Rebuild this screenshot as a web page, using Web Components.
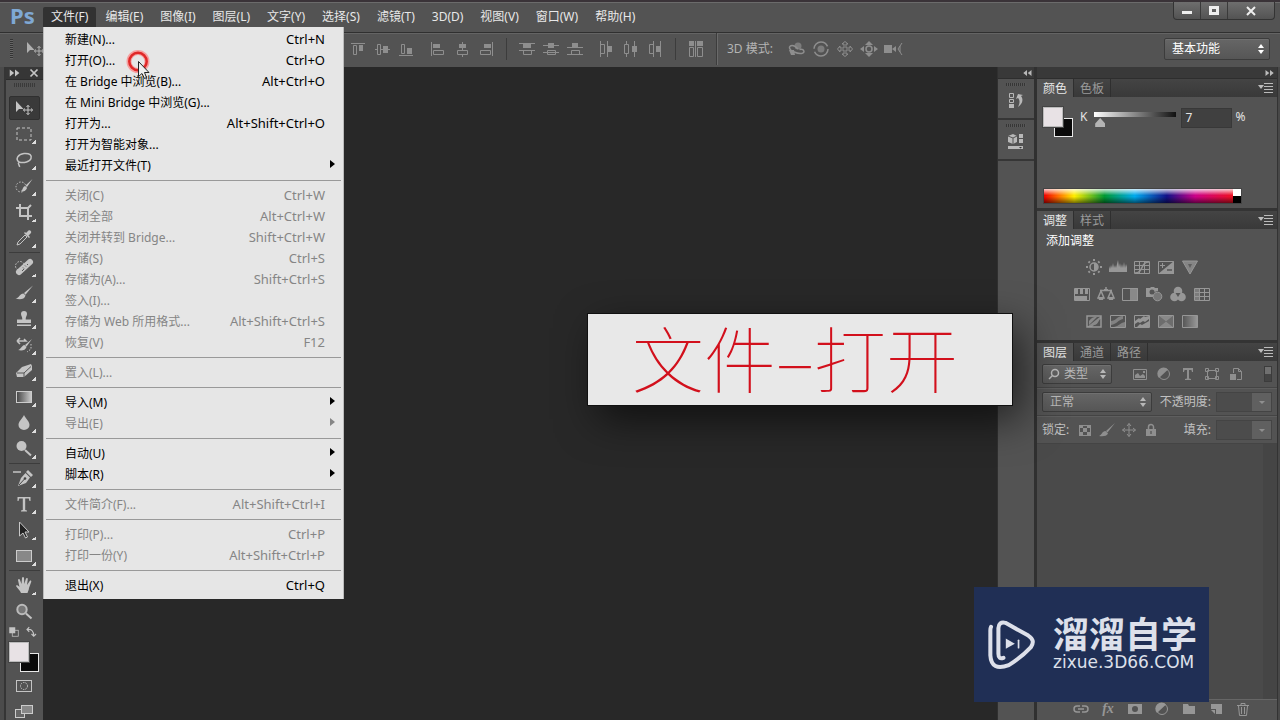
<!DOCTYPE html>
<html lang="zh-CN">
<head>
<meta charset="utf-8">
<title>Photoshop</title>
<style>
  body { margin: 0; background: #282828; font: 12px/16px "Noto Sans", "Noto Sans CJK SC", sans-serif; color: #e4e4e4; }
</style>
</head>
<body>
<ps-app>
  <ps-menubar slot="menubar">
    <ps-menu open>文件(F)</ps-menu><ps-menu>编辑(E)</ps-menu><ps-menu>图像(I)</ps-menu><ps-menu>图层(L)</ps-menu>
    <ps-menu>文字(Y)</ps-menu><ps-menu>选择(S)</ps-menu><ps-menu>滤镜(T)</ps-menu><ps-menu>3D(D)</ps-menu>
    <ps-menu>视图(V)</ps-menu><ps-menu>窗口(W)</ps-menu><ps-menu>帮助(H)</ps-menu>
  </ps-menubar>
  <ps-options slot="options"></ps-options>
  <ps-toolbox slot="tools"></ps-toolbox>
  <ps-icon-dock slot="dock"></ps-icon-dock>
  <ps-panels slot="panels">
    <ps-panel tabs="颜色,色板"><ps-color></ps-color></ps-panel>
    <ps-panel tabs="调整,样式"><ps-adjust>添加调整</ps-adjust></ps-panel>
    <ps-panel tabs="图层,通道,路径" grow><ps-layers></ps-layers></ps-panel>
  </ps-panels>
  <ps-dropdown slot="overlay">
    <ps-item key="Ctrl+N">新建(N)...</ps-item>
    <ps-item key="Ctrl+O">打开(O)...</ps-item>
    <ps-item key="Alt+Ctrl+O">在 Bridge 中浏览(B)...</ps-item>
    <ps-item>在 Mini Bridge 中浏览(G)...</ps-item>
    <ps-item key="Alt+Shift+Ctrl+O">打开为...</ps-item>
    <ps-item>打开为智能对象...</ps-item>
    <ps-item sub>最近打开文件(T)</ps-item>
    <ps-rule></ps-rule>
    <ps-item disabled key="Ctrl+W">关闭(C)</ps-item>
    <ps-item disabled key="Alt+Ctrl+W">关闭全部</ps-item>
    <ps-item disabled key="Shift+Ctrl+W">关闭并转到 Bridge...</ps-item>
    <ps-item disabled key="Ctrl+S">存储(S)</ps-item>
    <ps-item disabled key="Shift+Ctrl+S">存储为(A)...</ps-item>
    <ps-item disabled>签入(I)...</ps-item>
    <ps-item disabled key="Alt+Shift+Ctrl+S">存储为 Web 所用格式...</ps-item>
    <ps-item disabled key="F12">恢复(V)</ps-item>
    <ps-rule></ps-rule>
    <ps-item disabled>置入(L)...</ps-item>
    <ps-rule></ps-rule>
    <ps-item sub>导入(M)</ps-item>
    <ps-item disabled sub>导出(E)</ps-item>
    <ps-rule></ps-rule>
    <ps-item sub>自动(U)</ps-item>
    <ps-item sub>脚本(R)</ps-item>
    <ps-rule></ps-rule>
    <ps-item disabled key="Alt+Shift+Ctrl+I">文件简介(F)...</ps-item>
    <ps-rule></ps-rule>
    <ps-item disabled key="Ctrl+P">打印(P)...</ps-item>
    <ps-item disabled key="Alt+Shift+Ctrl+P">打印一份(Y)</ps-item>
    <ps-rule></ps-rule>
    <ps-item key="Ctrl+Q">退出(X)</ps-item>
  </ps-dropdown>
  <ps-caption slot="overlay">文件–打开</ps-caption>
  <ps-brand slot="overlay"><span slot="name">溜溜自学</span><span slot="site">zixue.3D66.COM</span></ps-brand>
  <ps-pointer slot="overlay"></ps-pointer>
</ps-app>

<script>
const define = (tag, css, html) => customElements.define(tag, class extends HTMLElement {
  connectedCallback() {
    if (this.shadowRoot) return;
    const t = document.createElement('template');
    t.innerHTML = `<style>*{box-sizing:border-box}:host{display:block;box-sizing:border-box}button,input,select{font:inherit;color:inherit;margin:0;padding:0;border:0;border-radius:0;background:none}${css}</style>` +
      (typeof html === 'function' ? html(this) : html);
    this.attachShadow({ mode: 'open' }).append(t.content.cloneNode(true));
  }
});

/* Glyphs: "c" = currentColor fill, "s" = currentColor stroke. */
const G = {
  /* tool glyphs, 20 x 20 */
  move: '<path class="c" d="M2 3v11l3-3h4.500z"/><path class="s" d="M14 7.500v9M9.500 12h9M12.500 9l1.500-1.700L15.500 9M12.500 15l1.500 1.700 1.500-1.700M11 10.500L9.300 12l1.700 1.500M17 10.500l1.700 1.500-1.700 1.500"/>',
  marquee: '<rect class="s" x="3" y="4" width="14" height="12" stroke-dasharray="3 2"/>',
  lasso: '<path class="s w" d="M5 12C1 9 4 4 10 3.500s8 2 7 5-7 5-12 3.500c-2 2 1 3 .5 5"/>',
  quick: '<circle class="s" cx="7" cy="11" r="5" stroke-dasharray="1.500 1.500"/><path class="c" d="M18.500 3l-7 6.500 1.500 1.500zM11 10l2 2c-1 3-4 4-6 3 2-1 1.500-4 4-5z"/>',
  crop: '<path class="s b" d="M6 2v12h12M2 6h12v12M14 6l3-3"/>',
  dropper: '<path class="s" d="M3 17l1-3 7-7 2 2-7 7z"/><path class="c" d="M10 5l5 5 1-1-1.500-1.500 2.500-2.500c1-1.500-1-3.500-2.500-2.500L12 5l-1-1z"/>',
  heal: '<circle class="s" cx="6" cy="9" r="4.500" stroke-dasharray="1.500 1.500"/><path d="M5 15L16 5" stroke="currentColor" stroke-width="6" stroke-linecap="round"/><path d="M9 10.500l1 1M11 8.500l1 1M10 12l-2 2M14 7l-1 1" stroke="#555"/>',
  brush: '<path class="c" d="M19 2.500L10 10l1.500 1.700zM9.500 10.500l2 2c-1 4-6 4.500-10 3 4-.5 4-5 8-5z"/>',
  stamp: '<path class="c" d="M7 5a3 3 0 0 1 6 0c0 2-1.500 3-1.300 5.500H17V14H3v-3.500h5.300C8.500 8 7 7 7 5zM3 15.500h14V17H3z"/>',
  history: '<path class="s w" d="M3 6h9l-2-2M3 6l3-3M3 6l3 3"/><path class="c" d="M18 4l-7 6 1.500 1.500zM10.500 10l2 2c-1 3.500-5 4-8.500 3 3-.5 3.500-4.500 6.500-5z"/><path class="s" d="M17 9v5l-4 3" stroke-dasharray="1.500 1.500"/>',
  eraser: '<path class="c" d="M8 6l9-3 1 2v4l-8 7H3L2 12z"/><path d="M3 12h7l7-6.500M10 12v4" stroke="#555" fill="none"/>',
  gradient: '<defs><linearGradient id="g"><stop stop-color="#444"/><stop offset="1" stop-color="#ccc"/></linearGradient></defs><rect x="2.500" y="4.500" width="15" height="11" fill="url(#g)" stroke="#ccc"/>',
  drop: '<path class="c" d="M10 2c2 4 5.500 6.500 5.500 10a5.500 5 0 0 1-11 0C4.500 8.500 8 6 10 2z"/>',
  dodge: '<circle class="c" cx="7.500" cy="7" r="5"/><path class="s b" d="M11 11l6 5.500"/>',
  pen: '<path class="s w" d="M-1 4h8"/><path class="c" d="M14 2l5 5-2 2-5-5zM11.500 5L16 9.500 12 15l-8 3 3-8z"/><path d="M5 17l5.500-6" stroke="#444"/><circle cx="11" cy="10.500" r="1.300" fill="#444"/>',
  type: '<path class="c" d="M3.500 3h13v4h-1l-.7-2.500h-3.600V16l1.800.5v1H7v-1l1.800-.5V4.500H5.200L4.500 7h-1z"/>',
  select: '<path d="M5.500 2v14l3.500-3 2.500 5 2-1-2.500-5H15z" fill="#222" stroke="#c8c8c8"/>',
  shape: '<rect x="2.500" y="4.500" width="15" height="11" fill="#888" stroke="#ccc"/>',
  hand: '<path class="c" d="M7 18c-1-3-4-5-5-7 0-1.500 2-1 3.500 1L4 5c.3-1.300 1.700-1.200 2 0l1.500 4L8 3c.3-1.300 1.800-1.300 2 0l.3 6L12 3.500c.5-1 1.900-.7 1.800.5L13 10l2.700-4c.8-1 2-.2 1.500 1L15 13c0 2-1 3-1.500 5z"/>',
  zoom: '<circle cx="8" cy="7.500" r="4.700" fill="#777" stroke="#bbb" stroke-width="2"/><path class="s b" d="M12 11.500l5.500 5"/>',
  mask: '<rect class="s" x="2.500" y="4.500" width="15" height="11"/><circle class="s" cx="10" cy="10" r="3.500" stroke-dasharray="1.500 1"/>',
  screens: '<rect x="1.500" y="7.500" width="9" height="8" fill="#666" stroke="#ccc"/><rect x="7.500" y="3.500" width="11" height="8" fill="#888" stroke="#ccc"/>',
  mini: '<rect x="7" y="7" width="8" height="8" class="s"/><rect class="c" x="3" y="3" width="8" height="8"/>',
  swap: '<path class="s w" d="M4 6c6-1 9 2 9 9M7 3L4 6l3 3M10 12l3 3 3-3"/>',
  /* bar glyphs, 16 x 16 */
  at: '<path class="s" d="M1 2.500h14M3.500 4.500h3v9h-3z"/><path class="c" d="M9 4h4v6H9z"/>',
  am: '<path class="s" d="M1 8.500h2M7 8.500h2M13 8.500h3M3.500 3.500h3v10h-3z"/><path class="c" d="M9 5h5v7H9z"/>',
  ab: '<path class="s" d="M1 14.500h14M3.500 3.500h3v9h-3z"/><path class="c" d="M9 7h5v6H9z"/>',
  al: '<path class="s" d="M1.500 1v14M3.500 9.500h10v4h-10z"/><path class="c" d="M3 3h7v4H3z"/>',
  ac: '<path class="s" d="M8.500 1v2M8.500 7v2M8.500 13v3M3.500 9.500h10v4h-10z"/><path class="c" d="M5 3h7v4H5z"/>',
  ar: '<path class="s" d="M14.500 1v14M2.500 9.500h10v4h-10z"/><path class="c" d="M6 3h7v4H6z"/>',
  dt: '<path class="s" d="M0 2.500h16M0 9.500h16M4.500 9.500h8v4h-8z"/><path class="c" d="M4 3h8v4H4z"/>',
  dm: '<path class="s" d="M0 4.500h16M0 11.500h16M4.500 9.500h8v4h-8z"/><path class="c" d="M5 2h6v5H5z"/>',
  db: '<path class="s" d="M0 6.500h16M0 13.500h16M4.500 9.500h8v4h-8z"/><path class="c" d="M5 2h6v4H5z"/>',
  dl: '<path class="s" d="M1.500 0v16M8.500 0v16M1.500 3.500h4v9h-4z"/><path class="c" d="M9 5h4v6H9z"/>',
  dc: '<path class="s" d="M3.500 0v3M3.500 13v3M11.500 0v16M1.500 3.500h4v9h-4z"/><path class="c" d="M9 5h5v6H9z"/>',
  dr: '<path class="s" d="M6.500 0v16M13.500 0v16M2.500 3.500h4v9h-4z"/><path class="c" d="M9 5h4v6H9z"/>',
  auto: '<path class="s" d="M7.500 0v16M1.500 6.500h4v9h-4zM9.500 6.500h5v9h-5z"/><path class="c" d="M1 0h5v5H1zM9 0h6v5H9z"/>',
  orbit: '<circle class="c" cx="9" cy="5" r="3.500" opacity=".7"/><path class="s w" d="M9 8C5 3 0 4 .5 7s8 6 12 5.500 3-5-2-4"/><path class="c" d="M0 9h5l1 5H2z"/>',
  roll: '<circle class="s w" cx="8" cy="8" r="7" stroke-dasharray="19 3"/><circle cx="8" cy="8" r="3.500" fill="currentColor" opacity=".7"/>',
  pan: '<path class="s" d="M8 .5L5 3h2v4H3V5L.5 8 3 11V9h4v4H5l3 2.500 3-2.500H9V9h4v2l2.500-3L13 5v2H9V3h2z"/>',
  slide: '<circle class="s w" cx="8" cy="8" r="3"/><path class="c" d="M8 0l4 4H4zM8 16l4-4H4zM-1 8l4-3v6zM17 8l-4-3v6z"/>',
  cam: '<path class="c" d="M-1 4h8v8h-8zM7 8l4-3v6z"/><path class="s" d="M17 2l-4 6 4 6M15 5v6"/>',
  /* adjustment glyphs */
  sun: '<circle class="s w" cx="8" cy="8" r="4"/><path class="c" d="M8 4a4 4 0 0 1 0 8z"/><path class="s b" d="M8 0v2M8 14v2M0 8h2M14 8h2M2.500 2.500l1.300 1.300M12.200 12.200l1.300 1.300M2.500 13.500l1.300-1.300M12.200 3.800l1.300-1.300"/>',
  levels: '<path class="c" d="M-1 13V7L0 10 1 6 2 9 3 4 4 9 5 6 6 9 8 1 9 8 10 4 11 9 12 5 13 9 14 3 15 9 16 5 17 8V13z"/>',
  curves: '<path class="s" d="M.5 2.500h15v12H.5zM5.500 2v12M10.500 2v12M0 6.500h16M0 10.500h16"/><path class="s w" d="M1 14c9 0 5-11 14-11"/>',
  expo: '<path class="s" d="M.5 2.500h15v12H.5z"/><path class="c" d="M16 2v13H0z"/><path class="s" d="M2 6.500h5M4.500 4v5"/><path d="M9 11h5" stroke="#555" stroke-width="1.500"/>',
  vib: '<path d="M.5 2h15L8 15z" fill="#858585" stroke="currentColor"/><path d="M6 5h4l-2 4z" fill="#5e5e5e"/>',
  hue: '<path class="s" d="M.5 2.500h15v12H.5z"/><path class="c" d="M1 3h3v5H1zM6 3h3v5H6zM11 3h3v5h-3zM1 10h12v4H1z"/>',
  bal: '<path class="s w" d="M8 1v4M2 4.500h12M3 5l-3 7h6zM13 5l-3 7h6z"/><path class="c" d="M0 11h6l-1 3H1zM10 11h6l-1 3h-4zM6 3h4v2H6z"/>',
  bw: '<path class="s" d="M.5 2.500h15v12H.5z"/><path class="c" d="M8 2h8v13H8z" opacity=".8"/>',
  photo: '<path class="c" d="M0 2h4l1-1h3l1 1h3v3a5 5 0 0 0-5 6H0z"/><circle cx="6" cy="6" r="2.500" fill="#555"/><circle cx="11.500" cy="10.500" r="4.300" fill="#777" stroke="currentColor"/>',
  mix: '<circle class="c" cx="8" cy="5" r="4.300"/><circle class="c" cx="4.500" cy="11" r="4.300"/><circle class="c" cx="11.500" cy="11" r="4.300"/><path d="M5.500 7h5L8 11z" fill="#555"/>',
  lut: '<path class="s" d="M.5 2.500h15v12H.5zM5.500 2v12M10.500 2v12M0 6.500h16M0 10.500h16"/><path class="c" d="M1 3h4v11H1z" opacity=".6"/>',
  inv: '<path class="s w" d="M1 3h14v11H1z"/><path class="c" d="M1 14L15 3v3c-3 0-2 6-7 6l-2 2zM3 12V8c3-4 5-4 8-4z" opacity=".8"/>',
  post: '<path class="s" d="M.5 2.500h15v12H.5z"/><path class="c" d="M1 8c5 0 6-5 12-5v3C8 7 7 11 1 12zM4 14c5-1 6-4 11-5v5z" opacity=".7"/>',
  thr: '<path class="s" d="M.5 2.500h15v12H.5z"/><path class="c" d="M1 8l4-3 1 1 4-3 1 1 4-1v3l-4 3-2-1-3 2-2-1-3 2zM3 14l3-3 2 1 7-4v6z"/>',
  selc: '<path class="s" d="M.5 2.500h15v12H.5z"/><path class="c" d="M1 3l7 5.500L1 14zM15 3L8 8.500l7 5.500z" opacity=".4"/><path class="c" d="M1 3h14L8 8.500zM1 14h14L8 8.500z" opacity=".8"/>',
  gmap: '<defs><linearGradient id="m"><stop stop-color="#555"/><stop offset="1" stop-color="#999"/></linearGradient></defs><path d="M.5 2.500h15v12H.5z" fill="url(#m)" stroke="currentColor"/>',
  /* layer glyphs */
  find: '<circle class="s w" cx="9" cy="7" r="3.500"/><path class="s w" d="M6.500 9.500L3 13"/>',
  pic: '<path class="s" d="M1.500 3.500h13v10h-13z"/><path class="c" d="M3 12V9l3-2 2 3 3-2 2 2v2zM11 5h2v2h-2z"/>',
  half: '<circle class="s" cx="8" cy="8" r="5.500"/><path class="c" d="M3 12a6 6 0 0 1 9-8.500z"/>',
  tee: '<path class="c" d="M3 2h10v4h-1l-.6-2H9v8.500l2 .5v1H5v-1l2-.5V4H4.600L4 6H3z"/>',
  path: '<path class="s" d="M3.500 4.500h9v8h-9zM1.500 2.500h3v3h-3zM11.500 2.500h3v3h-3zM1.500 10.500h3v3h-3zM11.500 10.500h3v3h-3z"/>',
  smart: '<path class="s" d="M5.500 7V2.500h5l3 3v8H9M10.500 2.500v3h3"/><path class="c" d="M2 8h6v6H2z"/>',
  grid: '<path class="s" d="M2.500 3.500h11v10h-11z"/><path class="c" d="M2 3h4v3H2zM10 3h4v3h-4zM6 6h4v4H6zM2 10h4v4H2zM10 10h4v4h-4z"/>',
  pen2: '<path class="c" d="M16 1L7 9l1.500 1.500zM6.500 9L9 11.500C8 14.500 3 14.500 0 14c3-1 3-5 6.500-5z"/>',
  cross: '<path class="s" d="M8 1.500v13M1.500 8h13M6 4l2-2.500L10 4M6 12l2 2.500 2-2.500M4 6L1.500 8 4 10M12 6l2.500 2-2.500 2"/>',
  lock: '<path class="c" d="M3 7h10v7H3z"/><path class="s w" d="M5.500 7V5a2.500 2.500 0 0 1 5 0v2"/><path d="M8 9v3" stroke="#444"/>',
  link: '<path class="s w" d="M7 11H4a3 3 0 0 1 0-6h3M9 5h3a3 3 0 0 1 0 6H9M5 8h6"/>',
  fmask: '<path class="c" fill-rule="evenodd" d="M1 3h14v10H1zM8 5a3 3 0 1 0 0 6 3 3 0 0 0 0-6z"/>',
  folder: '<path class="c" d="M2 3h5l1 2h6v8H2z"/>',
  page: '<path class="c" d="M3 3h11v10H8V8H3z"/><path class="c" d="M3 9h4v4z"/>',
  trash: '<path class="s" d="M2 4.500h12M6 4V2.500h4V4M3.500 5l1 9.500h7l1-9.500M6.500 6v7M9.500 6v7"/>',
  hist: '<path class="s" d="M1.500 1.500h4v4h-4zM1.500 7.500h4v3h-4z"/><path class="c" d="M1 12h5v4H1zM8 7l2-5 5 1-2 1c3 4 1 8-3 11 2-4 2-7 0-9z"/>',
  props: '<path class="c" d="M0 3l5-2 4 2v6l-4 2-5-2zM11 1h4v4h-4zM11 6h4v4h-4zM0 13h15v3H0z"/><path d="M0 3l5 2 4-2M5 5v6" stroke="#555" fill="none"/><path d="M11 14h3l-1.500 1.500z" fill="#333"/>',
  opts: '<path class="c" d="M0 5h6L3 9z"/><path class="s" d="M6 3.500h9M6 6.500h9M6 9.500h9M6 12.500h9"/>',
  right: '<path class="c" d="M2 4l5 4-5 4zM8 4l5 4-5 4z"/>',
  left: '<path class="c" d="M8 4L3 8l5 4zM14 4L9 8l5 4z"/>',
  x: '<path class="s b" d="M4 4l8 8M12 4l-8 8"/>',
  min: '<path class="c" d="M3 8h10v3H3z"/>',
  max: '<path fill="none" stroke="currentColor" stroke-width="3" d="M4.500 4.500h7v6h-7z"/>',
  updown: '<path class="c" d="M5 7l3-4 3 4zM5 9l3 4 3-4z"/>',
  down: '<path class="c" d="M5 7h6l-3 3z"/>',
  sub: '<path class="c" d="M4 4l5 4-5 4z"/>'
};
define('ps-icon', `:host{display:inline-block;width:var(--icon,16px);height:var(--icon,16px);flex:none}
  svg{display:block;width:100%;height:100%;overflow:visible}.c{fill:currentColor}.s{fill:none;stroke:currentColor}.w{stroke-width:1.5}.b{stroke-width:2}`,
  el => `<svg viewBox="0 0 ${el.hasAttribute('big') ? '20 20' : '16 16'}" aria-hidden="true">${G[el.getAttribute('name')]}</svg>`);
const btn = (n, cls = '') => `<button class="${cls}" aria-label="${n}"><ps-icon name="${n}"></ps-icon></button>`;
const btns = s => s.split(' ').map(n => btn(n)).join('');

define('ps-app', `:host{display:grid;grid-template:32px 35px 1fr / 6px 37px 1fr 40px 240px 3px;height:100vh;overflow:hidden;position:relative;background:#4b4b4b}
  .bar{grid-row:1;grid-column:1/-1;background:#535353;border-top:2px solid #3a3338;box-shadow:inset 0 1px #6b6b6b}
  .opt{grid-row:2;grid-column:1/-1;background:#535353;border-top:1px solid #303030;box-shadow:inset 0 1px #646464}
  .edge{border-right:2px solid #353535}.canvas{background:#282828}
  .end{background:#484848;border-left:1px solid #333}
  .dock,.panels,.tools{min-height:0;overflow:hidden}.dock{border:solid #303030;border-width:0 3px 0 1px;background:#535353}.tools{background:#535353}
  ::slotted(ps-toolbox),::slotted(ps-panels){height:100%}`,
  `<div class="bar"><slot name="menubar"></slot></div><div class="opt"><slot name="options"></slot></div>
   <div class="edge"></div><aside class="tools"><slot name="tools"></slot></aside><main class="canvas"></main>
   <div class="dock"><slot name="dock"></slot></div><aside class="panels"><slot name="panels"></slot></aside><div class="end"></div><slot name="overlay"></slot>`);

define('ps-menubar', `:host{display:flex;height:30px}
  .logo{width:43px;padding-left:10px;font:bold 22px/26px "Noto Sans",sans-serif;color:#7fa8d4}
  nav{display:flex;gap:1px;padding-top:5px;flex:1}
  .win{display:flex;height:18px;margin-right:5px;border:1px solid #333;border-top:0;border-radius:0 0 4px 4px;overflow:hidden;background:linear-gradient(#6e6e6e,#535353)}
  .win button{width:27px;display:grid;place-items:center;border-right:1px solid #3a3a3a}.win button:last-child{width:46px;border:0}
  .win ps-icon{color:#eee}`,
  `<div class="logo">Ps</div><nav><slot></slot></nav><div class="win">${btns('min max x')}</div>`);
define('ps-menu', `button{height:20px;padding:0 8px;color:#e8e8e8;white-space:nowrap;line-height:20px}:host([open]) button{background:#323232;border-radius:2px 2px 0 0}`,
  `<button><slot></slot></button>`);

define('ps-select', `:host{display:inline-grid;height:20px;border:1px solid #3c3c3c;border-radius:2px;background:linear-gradient(#666,#565656);box-shadow:inset 0 1px #707070}
  select{appearance:none;grid-area:1/1;padding:0 22px 0 7px;width:100%;outline:0}
  ps-icon{grid-area:1/1;align-self:center;justify-self:end;pointer-events:none}
  .lead{justify-self:start;margin-left:3px}:host([lead]) select{padding-left:21px}`,
  el => `<select aria-label="${el.getAttribute('label')}"><option>${el.getAttribute('value')}</option></select>
    ${el.hasAttribute('lead') ? '<ps-icon class="lead" name="find"></ps-icon>' : ''}<ps-icon name="updown"></ps-icon>`);

define('ps-options', `:host{display:flex;align-items:center;height:32px;color:#8e8e8e;padding:0 10px}
  .grip{width:3px;height:20px;background:repeating-linear-gradient(#333 0 1px,#666 1px 2px)}
  .tool{width:333px;padding-left:12px;--icon:20px;color:#b0b0b0;line-height:0}
  .g{display:flex}.g button{width:24px;height:24px;display:grid;place-items:center;color:inherit}
  .g+.g{margin-left:8px}hr{width:1px;height:22px;margin:0 8px;border:0;background:#3c3c3c}
  .full{height:32px;border-right:1px solid #6a6a6a;width:2px}
  .mode{color:#b4b4b4;margin:0 12px 0 1px}ps-select{width:106px;height:22px;margin-left:auto;color:#fff}`,
  `<div class="grip"></div><div class="tool"><ps-icon big name="move"></ps-icon></div>
   <div class="g">${btns('at am ab')}</div><div class="g">${btns('al ac ar')}</div><hr>
   <div class="g">${btns('dt dm db')}</div><div class="g">${btns('dl dc dr')}</div><hr>
   <div class="g">${btns('auto')}</div><hr class="full"><span class="mode">3D 模式:</span>
   <div class="g">${btns('orbit roll pan slide cam')}</div><ps-select label="工作区" value="基本功能"></ps-select>`);

const tool = n => `<button class="t" aria-label="${n}"><ps-icon big name="${n}"></ps-icon></button>`;
const tools = s => s.split(' ').map(tool).join('');
define('ps-toolbox', `:host{color:#c4c4c4}
  .head{height:13px;background:#363636;display:flex;justify-content:space-around;align-items:center;--icon:14px;border-bottom:1px solid #2c2c2c}
  .grip{height:4px;margin:3px 8px 7px;background:repeating-linear-gradient(90deg,#3a3a3a 0 1px,#535353 1px 2px)}
  .set{display:flex;flex-direction:column;gap:2px;padding:2px 3px 1px}
  .t{--icon:20px;height:24px;padding-right:1px;display:grid;place-items:center;position:relative;border:1px solid transparent;border-radius:2px}
  .t.on{background:#3a3a3a;border-color:#303030}
  .more .t:not(.on)::after{content:"";position:absolute;right:3px;bottom:1px;width:4px;height:4px;background:linear-gradient(135deg,transparent 50%,#ddd 50%)}
  hr{margin:0;border:0;height:1px;background:#3c3c3c}
  .mini{--icon:15px;display:flex;justify-content:space-between;padding:0 4px 0 1px;height:15px}
  .sw{height:32px;padding:2px 0 0 3px}`,
  `<div class="head">${'<ps-icon name="right"></ps-icon><ps-icon name="x"></ps-icon>'}</div><div class="grip"></div>
   <div class="set more">${tools('move').replace('"t"', '"t on"')}${tools('marquee lasso quick crop dropper')}<hr>${tools('heal brush stamp history eraser gradient drop dodge')}<hr>${tools('pen type select shape')}<hr>${tools('hand')}</div>
   <div class="set">${tools('zoom')}</div><div class="mini"><ps-icon big name="mini"></ps-icon><ps-icon big name="swap"></ps-icon></div>
   <div class="sw"><ps-swatch></ps-swatch></div><div class="set">${tools('mask screens')}</div>`);
define('ps-swatch', `:host{width:30px;height:30px;position:relative;flex:none}
  i{position:absolute;width:19px;height:19px;border:1px solid #e8e8e8;right:0;bottom:0;background:#0a0a0a}
  i+i{left:0;top:0;width:20px;height:20px;background:#e8e2e5;border-color:#bbb;box-shadow:0 0 0 1px #444}`, `<i></i><i></i>`);

define('ps-icon-dock', `:host{color:#b8b8b8}.head{height:12px;background:#393939;border-bottom:1px solid #2e2e2e;text-align:right;line-height:0;padding-right:1px}
  .head ps-icon{--icon:12px}.c{height:41px;border-bottom:2px solid #363636;display:flex;flex-direction:column;align-items:center;gap:6px;padding-top:4px}
  .c::before{content:"";width:20px;height:3px;background:repeating-linear-gradient(90deg,#363636 0 1px,#585858 1px 2px)}`,
  `<div class="head"><ps-icon name="left"></ps-icon></div><div class="c">${btn('hist')}</div><div class="c">${btn('props')}</div>`);

define('ps-panels', `:host{display:flex;flex-direction:column;gap:3px;background:#343434}
  .head{height:12px;background:#393939;margin-bottom:-3px;text-align:right;line-height:0;flex:none;border-bottom:1px solid #2e2e2e;color:#bbb;padding-right:1px}.head ps-icon{--icon:12px}`,
  `<div class="head"><ps-icon name="right"></ps-icon></div><slot></slot>`);
define('ps-panel', `:host{display:flex;flex-direction:column;min-height:0;background:#535353}:host([grow]){flex:1}
  .tabs{display:flex;height:18px;background:linear-gradient(#444,#393939);flex:none}
  .tabs button{padding:0 6px;border-right:1px solid #2f2f2f;color:#9a9a9a;line-height:17px}
  .tabs button:first-child{background:#535353;color:#e8e8e8}.tabs ps-icon{margin:1px 3px 0 auto;color:#bbb}
  .body{flex:1;min-height:0}`,
  el => `<div class="tabs">${el.getAttribute('tabs').split(',').map(t => `<button>${t}</button>`).join('')}<ps-icon name="opts"></ps-icon></div><div class="body"><slot></slot></div>`);

define('ps-color', `:host{height:111px;padding:10px 5px 0 6px}
  .row{display:flex;align-items:flex-start;height:30px;margin-bottom:51px;line-height:20px}
  label{margin:0 2px 0 7px}output{margin-left:3px}
  input[type=range]{appearance:none;flex:1;max-width:92px;min-width:0;height:16px;margin-top:4px;background:linear-gradient(90deg,#fff,#111) 5px 1px/calc(100% - 10px) 5px no-repeat}
  input[type=range]::-webkit-slider-thumb{appearance:none;width:10px;height:9px;margin-top:7px;background:#b4b4b4;clip-path:polygon(50% 0,100% 60%,100% 100%,0 100%,0 60%)}
  input.v{width:51px;height:20px;margin-top:1px;background:#404040;border:1px solid #383838;padding-left:3px}
  .spec{margin-right:30px;display:flex;border:1px solid #444;height:16px}
  .hue{flex:1;background:linear-gradient(#fffc,#fff0 45%,#0000 55%,#0008),linear-gradient(90deg,#e00,#f60 7%,#fe0 16%,#093 32%,#0ae 48%,#118 65%,#c08 80%,#e12)}
  .bwb{width:8px;background:linear-gradient(#fff 50%,#000 50%)}`,
  `<div class="row"><ps-swatch></ps-swatch><label for="k">K</label><input id="k" type="range" value="7"><input class="v" value="7" aria-label="K 值"><output>%</output></div>
   <div class="spec"><div class="hue"></div><div class="bwb"></div></div>`);

define('ps-adjust', `:host{height:111px;color:#fff}.t{height:24px;padding:4px 9px}
  .r{display:flex;justify-content:center;padding-right:30px;height:27px;color:#979797}.r button{width:24px;display:grid;place-items:center}`,
  `<div class="t"><slot></slot></div><div class="r">${btns('sun levels curves expo vib')}</div><div class="r">${btns('hue bal bw photo mix lut')}</div><div class="r">${btns('inv post thr selc gmap')}</div>`);

define('ps-layers', `:host{height:100%;display:flex;flex-direction:column;color:#c0c0c0}
  .row{display:flex;align-items:center;height:28px;padding:0 5px;border-bottom:1px solid #444;box-shadow:0 1px #5e5e5e;flex:none}
  .row button{width:24px;display:grid;place-items:center;color:#8f8f8f}
  .kind{width:70px;color:#b8b8b8}.first{height:27px}.mode{width:110px;color:#b8b8b8}
  .ic{display:flex;margin-left:16px}.lk{display:flex;margin-left:5px}.row .lk button{width:22px}
  .sw{width:8px;height:16px;margin-left:auto;background:linear-gradient(#707070 50%,#444 50%);border:1px solid #3c3c3c}
  label{margin-left:auto;margin-right:5px}
  .num{display:flex;border:1px solid #444;height:20px}.num input{width:35px;background:#4c4c4c}.row .num button{width:19px;background:#606060}
  .list{flex:1;border-right:14px solid #454545;background:#4a4a4a;min-height:0}
  .foot{height:19px;flex:none;display:flex;justify-content:center;padding-left:10px;border-top:1px solid #666;margin-bottom:2px;color:#969696}
  .foot button{width:27px;display:grid;place-items:center}.fx{font:italic bold 14px/16px "Liberation Serif",serif}`,
  `<div class="row first"><ps-select class="kind" lead label="类型筛选" value="类型"></ps-select><div class="ic">${btns('pic half tee path smart')}</div><div class="sw"></div></div>
   <div class="row"><ps-select class="mode" label="混合模式" value="正常"></ps-select><label for="o">不透明度:</label><div class="num"><input id="o">${btn('down')}</div></div>
   <div class="row"><span>锁定:</span><div class="lk">${btns('grid pen2 cross lock')}</div><label for="f">填充:</label><div class="num"><input id="f">${btn('down')}</div></div>
   <div class="list"></div>
   <div class="foot">${btn('link')}<button class="fx">fx</button>${btns('fmask half folder page trash')}</div>`);

define('ps-dropdown', `:host{position:absolute;left:43px;top:27px;width:301px;padding:2px 1px 3px;background:#e6e6e6;border-right:1px solid #bbb;border-left:1px solid #bbb;color:#000}`, `<slot></slot>`);
define('ps-item', `button{width:100%;height:21px;display:grid;grid-template-columns:1fr auto 17px;padding-left:20px;text-align:left;line-height:21px;white-space:nowrap}
  span{font-size:13px}:host([disabled]) button{color:#858585}ps-icon{margin:1px 0 0 1px}`,
  el => `<button ${el.hasAttribute('disabled') ? 'disabled' : ''}><slot></slot><span>${el.getAttribute('key') || ''}</span>${el.hasAttribute('sub') ? '<ps-icon name="sub"></ps-icon>' : ''}</button>`);
define('ps-rule', `:host{height:9px;padding:4px 1px}div{height:1px;background:#999}`, `<div></div>`);

define('ps-caption', `:host{position:absolute;left:588px;top:314px;width:424px;height:91px;background:#e8e8e8;color:#d2101c;box-shadow:0 0 0 1px #111,10px 14px 40px #0009;
  text-align:center;font:100 72px/84px "Noto Sans CJK SC",sans-serif;padding-right:10px;white-space:nowrap}`, `<slot></slot>`);
define('ps-brand', `:host{position:absolute;right:71px;bottom:18px;width:235px;height:115px;background:#202f55;color:#dde0ea;display:flex;align-items:center;gap:18px;padding-left:14px}
  svg{width:47px;height:50px}div{white-space:nowrap;padding-bottom:6px}::slotted(span){display:block}
  ::slotted([slot=name]){font:bold 36px/40px "Noto Sans CJK SC",sans-serif}::slotted([slot=site]){font:17px/20px "DejaVu Sans",sans-serif}`,
  `<svg viewBox="0 0 140 148" fill="none" stroke="currentColor" stroke-width="12" stroke-linecap="round" stroke-linejoin="round"><path d="M46 112Q31 118 31 100V24Q32 3 52 8L120 46Q142 60 128 80Q100 110 62 134Q10 154 7 105V30Q7 24 9 20"/><path d="M53 55v30l27-15z" fill="currentColor" stroke="none"/><path d="M91 60v22" stroke-width="5"/></svg>
   <div><slot name="name"></slot><slot name="site"></slot></div>`);
define('ps-pointer', `:host{position:absolute;left:124px;top:47px;width:32px;height:32px;pointer-events:none}`,
  `<svg width="32" height="32" viewBox="0 0 32 32"><circle cx="14" cy="14.500" r="9" fill="none" stroke="#f5a0a0" stroke-width="5"/><circle cx="14" cy="14.500" r="8.700" fill="none" stroke="#e02828" stroke-width="2.500"/><path d="M14.500 14.500v15l3.500-3 2.500 5 2-1-2-5h4.500z" fill="#eee" stroke="#222"/></svg>`);
</script>
</body>
</html>
